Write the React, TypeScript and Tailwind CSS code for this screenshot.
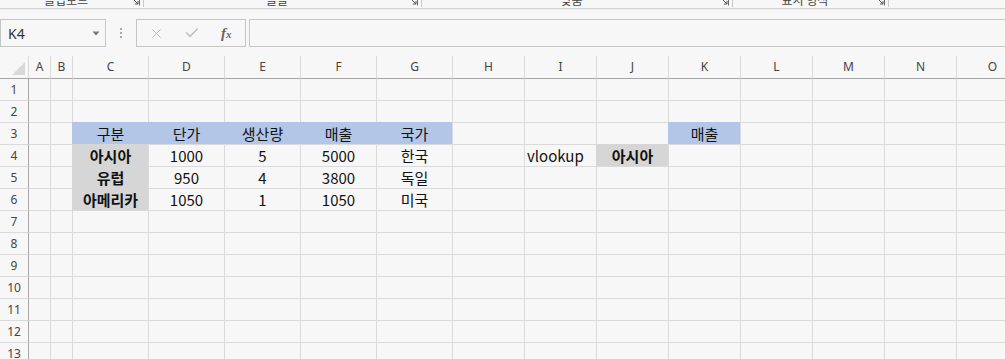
import React from "react";
import { X, Check } from "lucide-react";

type Cell = { t?: string; fill?: "blue" | "gray"; bold?: boolean; left?: boolean };

const colDefs = [
  { k: "A", head: "A" },
  { k: "B", head: "B" },
  { k: "C", head: "C" },
  { k: "D", head: "D" },
  { k: "E", head: "E" },
  { k: "F", head: "F" },
  { k: "G", head: "G" },
  { k: "H", head: "H" },
  { k: "I", head: "I" },
  { k: "J", head: "J" },
  { k: "K", head: "K" },
  { k: "L", head: "L" },
  { k: "M", head: "M" },
  { k: "N", head: "N" },
  { k: "O", head: "O" },
];

const data: Record<number, Record<string, Cell>> = {
  3: {
    C: { t: "구분", fill: "blue" },
    D: { t: "단가", fill: "blue" },
    E: { t: "생산량", fill: "blue" },
    F: { t: "매출", fill: "blue" },
    G: { t: "국가", fill: "blue" },
    K: { t: "매출", fill: "blue" },
  },
  4: {
    C: { t: "아시아", fill: "gray", bold: true },
    D: { t: "1000" },
    E: { t: "5" },
    F: { t: "5000" },
    G: { t: "한국" },
    I: { t: "vlookup", left: true },
    J: { t: "아시아", fill: "gray", bold: true },
  },
  5: {
    C: { t: "유럽", fill: "gray", bold: true },
    D: { t: "950" },
    E: { t: "4" },
    F: { t: "3800" },
    G: { t: "독일" },
  },
  6: {
    C: { t: "아메리카", fill: "gray", bold: true },
    D: { t: "1050" },
    E: { t: "1" },
    F: { t: "1050" },
    G: { t: "미국" },
  },
};

const rows = [1, 2, 3, 4, 5, 6, 7, 8, 9, 10, 11, 12, 13];

function Launcher() {
  return (
    <svg width="8" height="8" viewBox="0 0 8 8" className="shrink-0 -mt-[2px]">
      <path d="M0.5 0 V0.5 H7.5 V7.5" stroke="#666" strokeWidth="1" fill="none" />
      <path d="M1.5 1.5 L6 6" stroke="#555" strokeWidth="1" fill="none" />
      <path d="M3 6 H6 V3" stroke="#555" strokeWidth="1" fill="none" />
    </svg>
  );
}

function Group({ w, label }: { w: string; label: string }) {
  return (
    <div className={`flex items-start shrink-0 ${w}`}>
      <div className="flex-1 text-center text-[12px] leading-[12px] -mt-[6px] text-[#444]">{label}</div>
      <Launcher />
      <div className="w-[3px]" />
      <div className="w-px h-[7px] bg-[#c8c8c8]" />
    </div>
  );
}

function BodyCell({ row, col }: { row: number; col: string }) {
  const c: Cell | undefined = data[row]?.[col];
  const topBorder = row === 1 ? "border-t-[#a6a6a6]" : "border-t-[#dadada]";
  let leftBorder = col === "A" ? "border-l-[#a6a6a6]" : "border-l-[#dadada]";
  let bg = "";
  let top = topBorder;
  if (c?.fill === "blue") {
    bg = "bg-[#b4c6e7]";
    top = "border-t-[#b4c6e7]";
    leftBorder = "border-l-[#b4c6e7]";
  } else if (c?.fill === "gray") {
    bg = "bg-[#d6d6d6]";
    top = "border-t-[#d6d6d6]";
    leftBorder = "border-l-[#d6d6d6]";
  }
  return (
    <div
      className={`h-[22px] border-l border-t ${leftBorder} ${top} ${bg} flex items-center overflow-visible whitespace-nowrap text-[15px] leading-[20px] text-[#111] ${
        c?.left ? "justify-start pl-[2px]" : "justify-center"
      } ${c?.bold ? "font-bold" : ""}`}
    >
      {c?.t ?? ""}
    </div>
  );
}

export default function App() {
  return (
    <div className="w-[1005px] h-[359px] overflow-hidden bg-[#f7f7f7] font-['Noto_Sans_CJK_KR',sans-serif]">
      {/* ribbon bottom strip */}
      <div className="h-[9px] border-b border-[#d4d4d4] overflow-hidden flex items-start">
        <Group w="w-[144px]" label="클립보드" />
        <Group w="w-[278px]" label="글꼴" />
        <Group w="w-[311px]" label="맞춤" />
        <Group w="w-[156px]" label="표시 형식" />
      </div>
      <div className="h-[10px] border-t border-[#efefef]" />

      {/* formula bar */}
      <div className="h-[28px] flex items-stretch">
        <div className="w-[106px] shrink-0 border border-[#c6c6c6] flex items-center justify-between pl-[7px] pr-[5px]">
          <span className="font-['Noto_Sans',sans-serif] text-[14px] text-[#333]">K4</span>
          <svg width="8" height="5" viewBox="0 0 8 5">
            <path d="M0.5 0.5 H7.5 L4 4.5 Z" fill="#777" />
          </svg>
        </div>
        <div className="w-[30px] shrink-0 flex items-center justify-center">
          <div className="flex flex-col gap-[2px]">
            <div className="w-[2px] h-[2px] bg-[#aaa]" />
            <div className="w-[2px] h-[2px] bg-[#aaa]" />
            <div className="w-[2px] h-[2px] bg-[#aaa]" />
          </div>
        </div>
        <div className="w-[110px] shrink-0 border border-[#c6c6c6] flex items-center pl-[12px]">
          <X size={15} strokeWidth={1.5} color="#b5b5b5" />
          <div className="w-[20px]" />
          <Check size={16} strokeWidth={2.6} color="#c2c2c2" />
          <div className="w-[21px]" />
          <span className="font-['Liberation_Serif',serif] italic text-[15px] leading-none text-[#666] font-semibold">
            f<span className="text-[11px]">x</span>
          </span>
        </div>
        <div className="w-[3px] shrink-0" />
        <div className="flex-1 border border-[#c6c6c6] border-r-0" />
      </div>

      <div className="h-[9px]" />

      {/* grid */}
      <div className="grid grid-cols-[28px_22px_22px_76px_76px_76px_76px_76px_72px_72px_72px_72px_72px_72px_72px_72px] w-[1028px]">
        {/* header row */}
        <div className="h-[22px] relative">
          <svg width="28" height="22" className="absolute left-0 top-0">
            <polygon points="25,6 25,19 12,19" fill="#d9d9d9" />
          </svg>
        </div>
        {colDefs.map((c) => (
          <div
            key={c.k}
            className="h-[22px] border-l border-[#dadada] flex items-center justify-center font-['Noto_Sans',sans-serif] text-[12px] text-[#444]"
          >
            {c.head}
          </div>
        ))}
        {rows.map((r) => (
          <React.Fragment key={r}>
            <div
              className={`h-[22px] border-t ${
                r === 1 ? "border-[#a6a6a6]" : "border-[#dadada]"
              } flex items-center justify-center font-['Noto_Sans',sans-serif] text-[12px] text-[#444]`}
            >
              {r}
            </div>
            {colDefs.map((c) => (
              <BodyCell key={c.k} row={r} col={c.k} />
            ))}
          </React.Fragment>
        ))}
      </div>
    </div>
  );
}
